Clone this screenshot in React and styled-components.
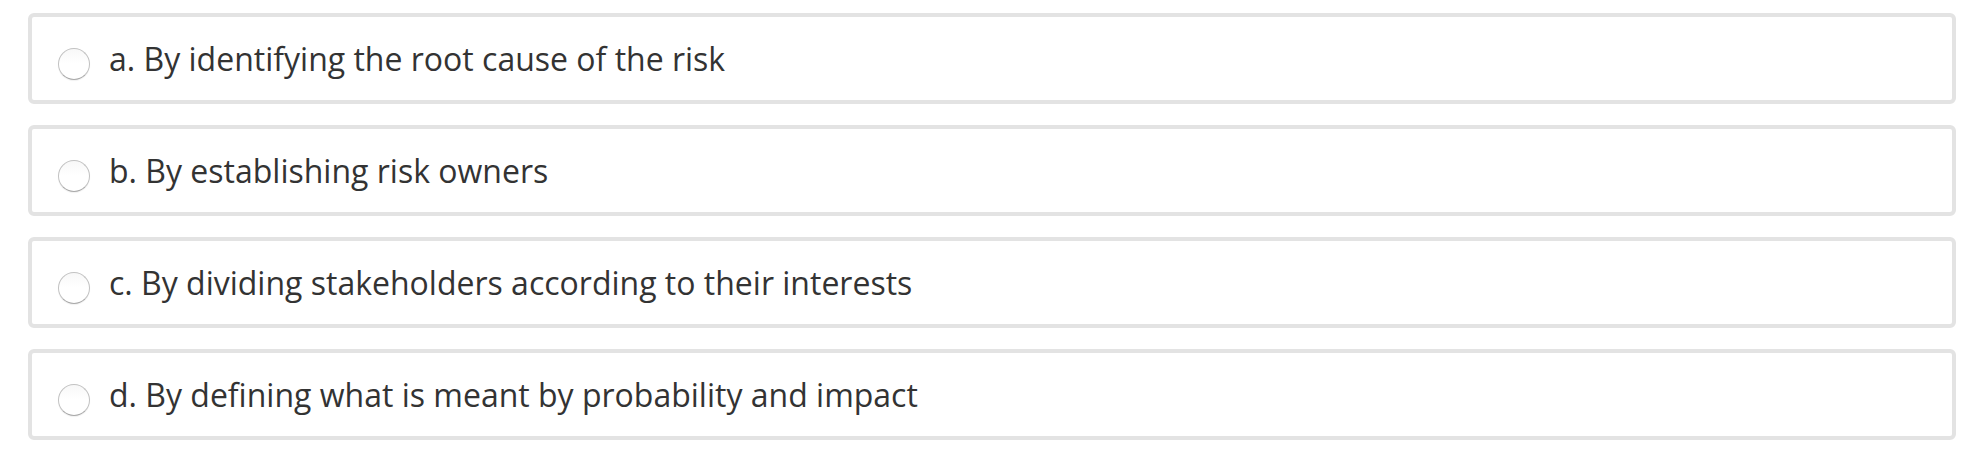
import React from "react";
import styled, { createGlobalStyle } from "styled-components";

const Global = createGlobalStyle`
  html, body { margin: 0; padding: 0; background: #fff; }
  body { font-family: "Open Sans", "Noto Sans", sans-serif; }
`;

const List = styled.div`
  display: flex;
  flex-direction: column;
  gap: 21px;
  padding: 13px 20px 0 28px;
`;

const Option = styled.label`
  display: flex;
  align-items: flex-start;
  box-sizing: border-box;
  height: 91px;
  padding: 20px 25px 0 26px;
  border: 4px solid #e3e3e3;
  border-radius: 6px;
  background: #fff;
  cursor: pointer;
`;

const Radio = styled.span`
  flex: none;
  box-sizing: border-box;
  width: 32px;
  height: 32px;
  margin-top: 11px;
  border-radius: 50%;
  border: 1.5px solid #c2c2c2;
  border-bottom-color: #a9a9a9;
  background: linear-gradient(#f8f8f8, #ffffff 50%);
  box-shadow: 0 1px 1px rgba(0, 0, 0, 0.06);
`;

const Label = styled.span`
  margin-left: 19px;
  font-size: 32px;
  line-height: 44px;
  color: #333;
  white-space: nowrap;
`;

const options = [
  "a. By identifying the root cause of the risk",
  "b. By establishing risk owners",
  "c. By dividing stakeholders according to their interests",
  "d. By defining what is meant by probability and impact",
];

export default function App() {
  return (
    <>
      <Global />
      <List>
        {options.map((o) => (
          <Option key={o}>
            <Radio />
            <Label>{o}</Label>
          </Option>
        ))}
      </List>
    </>
  );
}
